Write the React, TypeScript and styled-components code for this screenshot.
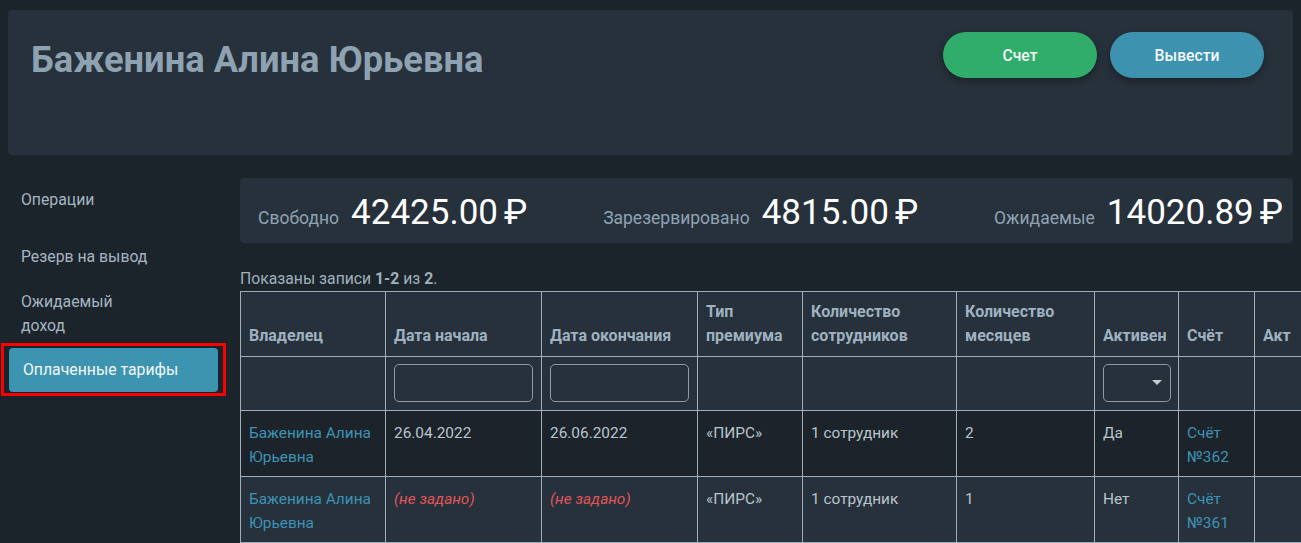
import React from "react";
import styled, { createGlobalStyle } from "styled-components";

const Global = createGlobalStyle`
  html, body { margin: 0; padding: 0; background: #1c242b; overflow: hidden; }
  body { font-family: Roboto, "Noto Sans", Arial, sans-serif; color: #b9c5ce; }
  * { box-sizing: border-box; }
`;

const Page = styled.div`
  width: 1301px;
  min-height: 543px;
  padding-top: 10px;
`;

const HeaderCard = styled.header`
  margin: 0 8px;
  height: 145px;
  background: #27313b;
  border-radius: 4px;
  padding: 22px 29px 0 23px;
  display: flex;
  justify-content: space-between;
  align-items: flex-start;
`;

const Title = styled.h1`
  margin: 0;
  padding-top: 8px;
  font-size: 36.3px;
  line-height: 40px;
  font-weight: 700;
  color: #8fa2b2;
`;

const Actions = styled.div`
  display: flex;
  gap: 13px;
`;

const PillButton = styled.button<{ $tone: "green" | "blue" }>`
  width: 154px;
  height: 46px;
  border: 0;
  border-radius: 23px;
  background: ${(p) => (p.$tone === "green" ? "#31ad6b" : "#3d93af")};
  color: #f4f8fa;
  font-family: Roboto, Arial, sans-serif;
  font-size: 15.7px;
  font-weight: 500;
  box-shadow: 0 3px 7px rgba(0, 0, 0, 0.35);
  cursor: pointer;
`;

const Body = styled.div`
  display: flex;
  align-items: flex-start;
`;

const Sidebar = styled.nav`
  width: 240px;
  flex: none;
  padding: 23px 22px 0 8px;
  display: flex;
  flex-direction: column;
`;

const NavItem = styled.a<{ $active?: boolean; $after?: number }>`
  display: block;
  position: relative;
  padding: 10px 13px 10px ${(p) => (p.$active ? 14 : 13)}px;
  margin-bottom: ${(p) => p.$after ?? 0}px;
  margin-left: ${(p) => (p.$active ? 1 : 0)}px;
  font-size: 15.8px;
  line-height: 24px;
  color: ${(p) => (p.$active ? "#f3f7f9" : "#a6b5c1")};
  background: ${(p) => (p.$active ? "#3d94b0" : "transparent")};
  border-radius: 4px;
  text-decoration: none;
  ${(p) =>
    p.$active &&
    `
    &::after {
      content: "";
      position: absolute;
      top: -5px;
      bottom: -4px;
      left: -8px;
      right: -8px;
      border: 3px solid #ff0000;
      pointer-events: none;
    }
  `}
`;

const Content = styled.main`
  flex: 1;
  margin-right: 8px;
  padding-top: 23px;
  min-width: 0;
`;

const StatsCard = styled.section`
  height: 65px;
  background: #27313b;
  border-radius: 4px;
  padding: 3px 10px 0 18px;
  display: flex;
  align-items: center;
  justify-content: space-between;
`;

const Stat = styled.div`
  display: flex;
  align-items: baseline;
  gap: 12px;
`;

const StatLabel = styled.span`
  font-size: 17.5px;
  color: #8fa3b4;
`;

const StatValue = styled.span`
  font-size: 35px;
  color: #ffffff;
  white-space: nowrap;
`;

const Rub = styled.span`
  margin-left: 6px;
`;

const Summary = styled.div`
  margin-top: 24px;
  font-size: 15.75px;
  line-height: 24px;
  color: #9fb0bd;
  b { font-weight: 700; }
`;

const TableWrap = styled.div`
  width: 1080px;
`;

const Table = styled.table`
  border-collapse: collapse;
  table-layout: fixed;
  width: 1080px;
  font-size: 15.4px;
  line-height: 24px;
`;

const Th = styled.th`
  border: 1px solid #9eaeba;
  background: #27313b;
  color: #9fb2c1;
  font-size: 16px;
  font-weight: 700;
  text-align: left;
  vertical-align: bottom;
  padding: 8px 8px;
`;

const FilterCell = styled.td`
  border: 1px solid #9eaeba;
  background: #27313b;
  padding: 7px 8px 8px;
  height: 54px;
`;

const Row = styled.tr<{ $dark: boolean }>`
  background: ${(p) => (p.$dark ? "#1c232a" : "#27313b")};
`;

const Td = styled.td`
  border: 1px solid #9eaeba;
  vertical-align: top;
  padding: 10px 8px 6px;
  color: #b9c5ce;
  height: 66px;
`;

const Link = styled.a`
  color: #3c93b5;
  text-decoration: none;
`;

const Unset = styled.span`
  color: #e0555a;
  font-style: italic;
`;

const FilterInput = styled.input`
  display: block;
  width: 100%;
  height: 38px;
  border: 1px solid #8c9ba6;
  border-radius: 5px;
  background: transparent;
  color: #b9c5ce;
  font-size: 15px;
  padding: 0 8px;
`;

const SelectBox = styled.div`
  width: 68px;
  height: 38px;
  border: 1px solid #8c9ba6;
  border-radius: 5px;
  display: flex;
  align-items: center;
  justify-content: flex-end;
  padding-right: 8px;
`;

const cols = [145, 156, 156, 105, 154, 138, 84, 76, 66];

type Rec = {
  start: string | null;
  end: string | null;
  months: string;
  active: string;
  invoice: string;
  dark: boolean;
};

const rows: Rec[] = [
  { start: "26.04.2022", end: "26.06.2022", months: "2", active: "Да", invoice: "№362", dark: true },
  { start: null, end: null, months: "1", active: "Нет", invoice: "№361", dark: false },
];

export default function App() {
  return (
    <Page>
      <Global />
      <HeaderCard>
        <Title>Баженина Алина Юрьевна</Title>
        <Actions>
          <PillButton $tone="green">Счет</PillButton>
          <PillButton $tone="blue">Вывести</PillButton>
        </Actions>
      </HeaderCard>
      <Body>
        <Sidebar>
          <NavItem $after={13}>Операции</NavItem>
          <NavItem $after={1}>Резерв на вывод</NavItem>
          <NavItem>
            Ожидаемый
            <br />
            доход
          </NavItem>
          <NavItem $active>Оплаченные тарифы</NavItem>
        </Sidebar>
        <Content>
          <StatsCard>
            <Stat>
              <StatLabel>Свободно</StatLabel>
              <StatValue>
                42425.00<Rub>₽</Rub>
              </StatValue>
            </Stat>
            <Stat>
              <StatLabel>Зарезервировано</StatLabel>
              <StatValue>
                4815.00<Rub>₽</Rub>
              </StatValue>
            </Stat>
            <Stat>
              <StatLabel>Ожидаемые</StatLabel>
              <StatValue>
                14020.89<Rub>₽</Rub>
              </StatValue>
            </Stat>
          </StatsCard>
          <Summary>
            Показаны записи <b>1-2</b> из <b>2</b>.
          </Summary>
          <TableWrap>
            <Table>
              <colgroup>
                {cols.map((w, i) => (
                  <col key={i} style={{ width: w }} />
                ))}
              </colgroup>
              <thead>
                <tr>
                  <Th>Владелец</Th>
                  <Th>Дата начала</Th>
                  <Th>Дата окончания</Th>
                  <Th>Тип премиума</Th>
                  <Th>Количество сотрудников</Th>
                  <Th>Количество месяцев</Th>
                  <Th>Активен</Th>
                  <Th>Счёт</Th>
                  <Th>Акт</Th>
                </tr>
                <tr>
                  <FilterCell />
                  <FilterCell>
                    <FilterInput />
                  </FilterCell>
                  <FilterCell>
                    <FilterInput />
                  </FilterCell>
                  <FilterCell />
                  <FilterCell />
                  <FilterCell />
                  <FilterCell>
                    <SelectBox>
                      <svg width="10" height="6" viewBox="0 0 10 6">
                        <path d="M0 0 L10 0 L5 5 Z" fill="#c3ccd3" />
                      </svg>
                    </SelectBox>
                  </FilterCell>
                  <FilterCell />
                  <FilterCell />
                </tr>
              </thead>
              <tbody>
                {rows.map((r, i) => (
                  <Row key={i} $dark={r.dark}>
                    <Td>
                      <Link>Баженина Алина Юрьевна</Link>
                    </Td>
                    <Td>{r.start ?? <Unset>(не задано)</Unset>}</Td>
                    <Td>{r.end ?? <Unset>(не задано)</Unset>}</Td>
                    <Td>«ПИРС»</Td>
                    <Td>1 сотрудник</Td>
                    <Td>{r.months}</Td>
                    <Td>{r.active}</Td>
                    <Td>
                      <Link>Счёт {r.invoice}</Link>
                    </Td>
                    <Td />
                  </Row>
                ))}
              </tbody>
            </Table>
          </TableWrap>
        </Content>
      </Body>
    </Page>
  );
}
